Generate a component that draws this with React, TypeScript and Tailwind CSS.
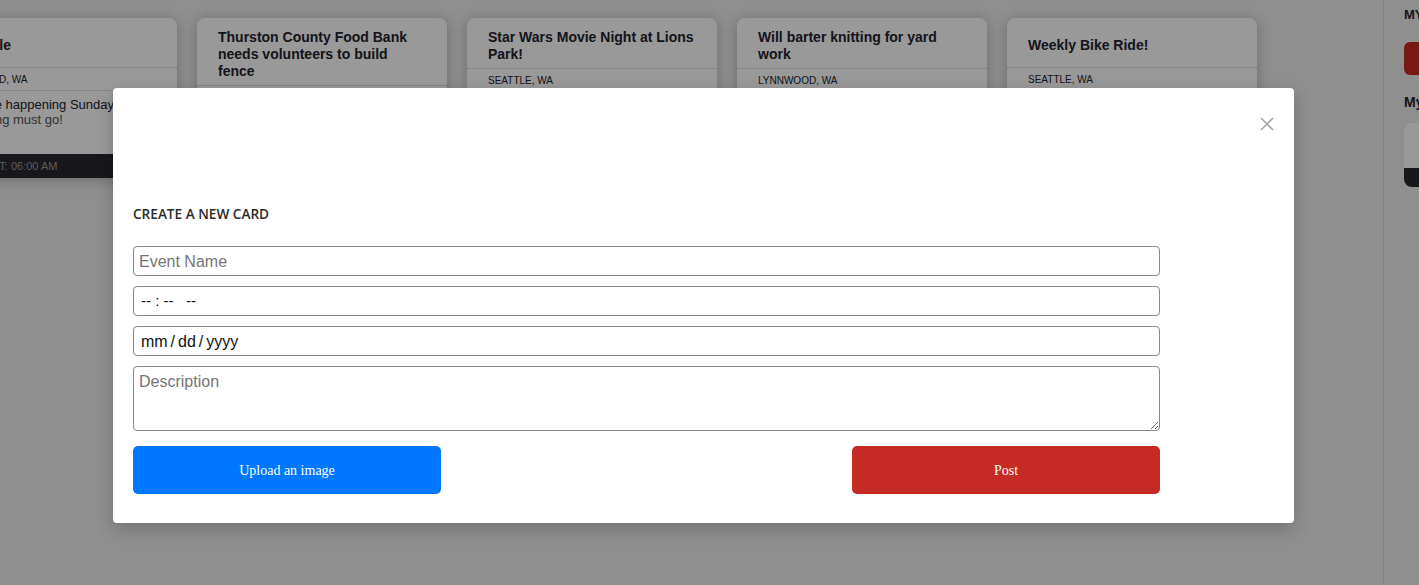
import React from "react";

const cards = [
  {
    title: "Yard Sale",
    loc: "Lynnwood, WA",
    l1: "Yard sale happening Sunday",
    l2: "Everything must go!",
    foot: "STARTS AT: 06:00 AM",
  },
  {
    title: "Thurston County Food Bank needs volunteers to build fence",
    loc: "Olympia, WA",
    l1: "We need help this weekend",
    l2: "Bring your own tools",
    foot: "STARTS AT: 09:00 AM",
  },
  {
    title: "Star Wars Movie Night at Lions Park!",
    loc: "Seattle, WA",
    l1: "Bring a blanket",
    l2: "Popcorn provided",
    foot: "STARTS AT: 08:00 PM",
  },
  {
    title: "Will barter knitting for yard work",
    loc: "Lynnwood, WA",
    l1: "Scarves, hats and more",
    l2: "Message me",
    foot: "STARTS AT: 10:00 AM",
  },
  {
    title: "Weekly Bike Ride!",
    loc: "Seattle, WA",
    l1: "Meet at the trailhead",
    l2: "All levels welcome",
    foot: "STARTS AT: 07:00 AM",
  },
];

function Card({ c }: { c: (typeof cards)[number] }) {
  return (
    <div className="w-[250px] shrink-0 rounded-lg bg-white shadow-[0_2px_14px_rgba(0,0,0,0.25)] overflow-hidden">
      <div className="min-h-[50px] px-[21px] pt-[11px] pb-[5px] flex items-center border-b border-dotted border-[#c8c8c8]">
        <div className="text-[14px] leading-[17px] font-bold text-[#23232e]">{c.title}</div>
      </div>
      <div className="h-[23px] px-[21px] flex items-center border-b border-dotted border-[#c8c8c8] text-[10px] uppercase text-[#23232e]">
        {c.loc}
      </div>
      <div className="h-[63px] px-[21px] pt-[6px] text-[13px] leading-[15px]">
        <div className="text-[#23232e] whitespace-nowrap">{c.l1}</div>
        <div className="text-[#555] whitespace-nowrap">{c.l2}</div>
      </div>
      <div className="h-[24px] bg-[#28282f] px-[21px] flex items-center text-[11px] text-[#9a9a9a] whitespace-nowrap">
        {c.foot}
      </div>
    </div>
  );
}

export default function App() {
  return (
    <div
      className="relative w-[1419px] h-[585px] overflow-hidden bg-[#eeeeee]"
      style={{ fontFamily: '"Liberation Sans", Arial, sans-serif' }}
    >
      <div className="flex h-full">
        <div className="w-[1383px] shrink-0 overflow-hidden">
          <div className="flex items-start gap-5 pt-[18px] ml-[-73px]">
            {cards.map((c, i) => (
              <Card key={i} c={c} />
            ))}
          </div>
        </div>
        <div className="flex-1 border-l border-[#d6d6d6] pl-5 pt-[5px] overflow-hidden">
          <div className="text-[13px] font-bold text-[#23232e] whitespace-nowrap">MY EVENTS</div>
          <div className="mt-[17px] h-[33px] w-[200px] rounded-md bg-[#c8291f]" />
          <div className="mt-[17px] text-[14px] font-bold text-[#23232e] whitespace-nowrap">My Cards</div>
          <div className="mt-[10px] w-[200px] h-[64px] rounded-lg bg-white overflow-hidden flex flex-col justify-end">
            <div className="h-[19px] bg-[#28282f]" />
          </div>
        </div>
      </div>

      {/* overlay */}
      <div className="absolute inset-0 bg-black/40" />

      {/* modal */}
      <div className="absolute left-[113px] top-[88px] w-[1181px] h-[435px] bg-white rounded-[4px] shadow-[0_6px_18px_rgba(0,0,0,0.2)] pl-5">
        <div className="flex justify-end pt-[29px] pr-[20px]">
          <svg width="14" height="14" viewBox="0 0 14 14">
            <path d="M1 1 L13 13 M13 1 L1 13" stroke="#a8a8a8" strokeWidth="1.6" />
          </svg>
        </div>
        <div
          className="mt-[74px] text-[13.6px] leading-[18px] font-semibold text-[#2b2b2b]"
          style={{ fontFamily: '"Open Sans", "Noto Sans", sans-serif' }}
        >
          CREATE A NEW CARD
        </div>
        <div className="mt-[23px] w-[1027px] flex flex-col gap-[10px] text-[16px]">
          <div className="h-[30px] rounded-[4px] border border-[#8a8a8a] px-[5px] pt-[1px] flex items-center text-[#757575]">
            Event Name
          </div>
          <div className="h-[30px] rounded-[4px] border border-[#8a8a8a] px-[7px] flex items-center text-[#111] whitespace-pre text-[15px]">
            {"-- : --   --"}
          </div>
          <div className="h-[30px] rounded-[4px] border border-[#8a8a8a] px-[7px] pt-[1px] flex items-center text-[#111] [word-spacing:-1.5px]">
            mm / dd / yyyy
          </div>
          <textarea
            placeholder="Description"
            className="h-[65px] rounded-[4px] border border-[#8a8a8a] px-[5px] pt-[5px] text-[16px] leading-[20px] placeholder:text-[#757575] outline-none resize-y"
          />
        </div>
        <div
          className="mt-[15px] w-[1027px] flex justify-between text-[14px] text-white"
          style={{ fontFamily: '"Liberation Serif", "Times New Roman", serif' }}
        >
          <div className="w-[308px] h-[48px] rounded-[5px] bg-[#0077ff] flex items-center justify-center">
            Upload an image
          </div>
          <div className="w-[308px] h-[48px] rounded-[5px] bg-[#c62a24] flex items-center justify-center">
            Post
          </div>
        </div>
      </div>
    </div>
  );
}
